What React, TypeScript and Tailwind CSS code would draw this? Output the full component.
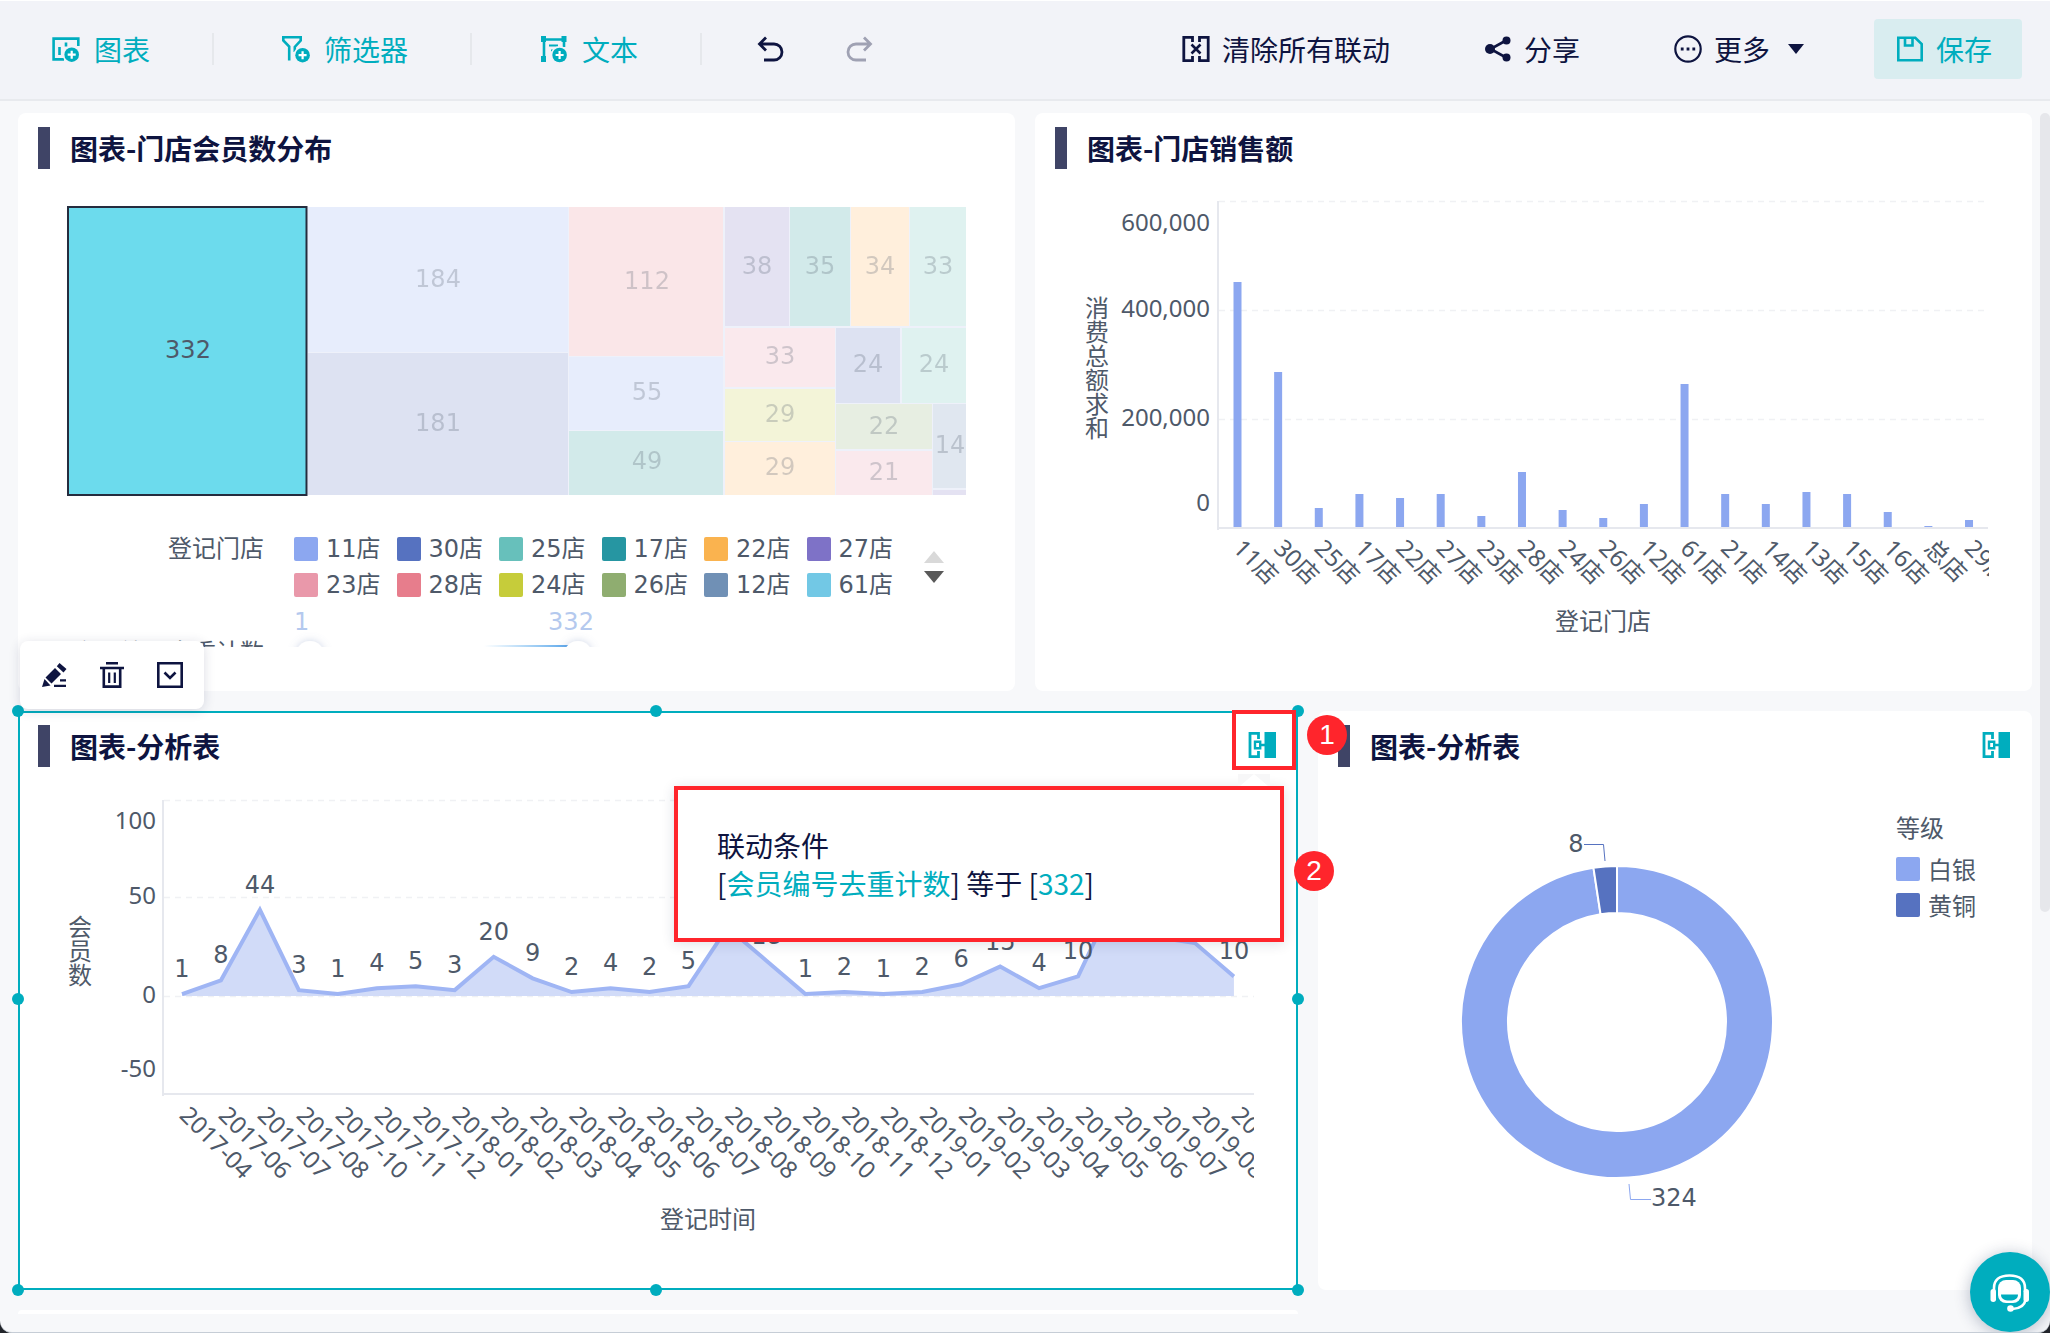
import React from "react";

const SANS = "font-['Noto_Sans_CJK_SC','Noto_Sans',sans-serif]";
const AXIS = "font-['Noto_Sans','Noto_Sans_CJK_SC',sans-serif] text-[24px] fill-[#4e5969]";
const LABEL = "font-['DejaVu_Sans','Noto_Sans_CJK_SC',sans-serif] text-[24px]";

/* ---------- icons ---------- */

function PlusBadge({ cx, cy }: { cx: number; cy: number }) {
  return (
    <>
      <circle cx={cx} cy={cy} r="9" stroke="none" className="fill-[#f2f3f8]" />
      <circle cx={cx} cy={cy} r="7.3" stroke="none" className="fill-[#00adbe]" />
      <path d={`M${cx - 4} ${cy}h8M${cx} ${cy - 4}v8`} className="stroke-white" strokeWidth="2.2" />
    </>
  );
}

function ChartAddIcon() {
  return (
    <svg viewBox="0 0 28 28" className="size-7" fill="none" stroke="currentColor" strokeWidth="2.6" aria-hidden="true">
      <path d="M26.3 11V3.6H1.6v20.8H12" />
      <path d="M7.5 12v8M14 7.5v4" />
      <PlusBadge cx={19.7} cy={19.7} />
    </svg>
  );
}

function FilterAddIcon() {
  return (
    <svg viewBox="0 0 28 28" className="size-7" fill="none" stroke="currentColor" strokeWidth="2.6" aria-hidden="true">
      <path d="M7.2 25.5V11.5L1.3 5.5V2.3h17.4v3.2L12.8 12v5" />
      <PlusBadge cx={20.6} cy={20.2} />
    </svg>
  );
}

function TextAddIcon() {
  return (
    <svg viewBox="0 0 28 28" className="size-7" fill="none" stroke="currentColor" strokeWidth="2.6" aria-hidden="true">
      <path d="M4 4.5h20M4 4v20M24 5v7" />
      <path d="M1 1h5v6H1zM21.500 1h5v6h-5zM1 21h5v6H1z" fill="currentColor" stroke="none" />
      <path d="M9 10.5h9M11 15.5h4" strokeWidth="2.2" />
      <PlusBadge cx={19.6} cy={20} />
    </svg>
  );
}

function UndoIcon({ flip = false }: { flip?: boolean }) {
  return (
    <svg viewBox="0 0 28 28" className="size-7" fill="none" stroke="currentColor" strokeWidth="2.8" aria-hidden="true">
      {flip ? (
        <path d="M19 2.5l6.500 6.500-6.500 6.500M25 9H11a8 8 0 0 0 0 16h10" />
      ) : (
        <path d="M9 2.500l-6.500 6.500 6.500 6.500M3 9h14a8 8 0 0 1 0 16H7" />
      )}
    </svg>
  );
}

function ClearLinkIcon() {
  return (
    <svg viewBox="0 0 28 28" className="size-7" fill="none" stroke="currentColor" strokeWidth="2.8" aria-hidden="true">
      <path d="M10.500 7V2.400H1.800v23.200h8.700V21M17.500 7V2.400h8.700v23.200h-8.700V21" />
      <path d="M9.500 9.500l9 9M18.500 9.500l-9 9" strokeWidth="2.600" />
    </svg>
  );
}

function ShareIcon() {
  return (
    <svg viewBox="0 0 28 28" className="size-7" aria-hidden="true">
      <path d="M22 5.500L6.500 14 22 22.500" fill="none" stroke="currentColor" strokeWidth="2.600" />
      <circle cx="22.500" cy="5.500" r="4" fill="currentColor" />
      <circle cx="6" cy="14" r="5" fill="currentColor" />
      <circle cx="22.500" cy="22.500" r="4" fill="currentColor" />
    </svg>
  );
}

function MoreIcon() {
  return (
    <svg viewBox="0 0 28 28" className="size-7" aria-hidden="true">
      <circle cx="14" cy="14" r="12.700" fill="none" stroke="currentColor" strokeWidth="2.200" />
      <path d="M6.800 12.600h2.800v2.800H6.800zM12.600 12.600h2.800v2.800h-2.800zM18.400 12.600h2.800v2.800h-2.800z" fill="currentColor" />
    </svg>
  );
}

function SaveIcon() {
  return (
    <svg viewBox="0 0 28 28" className="size-7" fill="none" stroke="currentColor" strokeWidth="2.600" aria-hidden="true">
      <path d="M2.300 2.800h17L25.700 9v16.200H2.300z" />
      <path d="M9 3v7.500h7.500V3" />
    </svg>
  );
}

function LinkIcon() {
  return (
    <svg viewBox="0 0 28 28" className="size-7" fill="none" stroke="currentColor" strokeWidth="2.800" aria-hidden="true">
      <path d="M10.500 8V2.400H2v23.200h8.500V20" />
      <path d="M7 10.800h5.200v6.400H7zM12 14h5" strokeWidth="2.400" />
      <path d="M16.500 1H28v26H16.500z" fill="currentColor" stroke="none" />
    </svg>
  );
}

function PencilIcon() {
  return (
    <svg viewBox="0 0 26 26" className="size-[26px]" fill="currentColor" aria-hidden="true">
      <path d="M14 6l6 6L10.500 21.500l-6-6zM15.800 4.200L18.500 1l7 6-3 3.400zM3.500 17l6 6.500L1 25z" />
      <path d="M19 17.200h6v2.300h-6zM13 22.700h12V25H13z" />
    </svg>
  );
}

function TrashIcon() {
  return (
    <svg viewBox="0 0 26 26" className="size-[26px]" fill="none" stroke="currentColor" strokeWidth="2.600" aria-hidden="true">
      <path d="M7 1.300h12M1 6h24M4.800 6v18.600h16.400V6" />
      <path d="M10.200 10.500v10.500M15.800 10.500v10.500" strokeWidth="2.200" />
    </svg>
  );
}

function ExpandIcon() {
  return (
    <svg viewBox="0 0 26 26" className="size-[26px]" fill="none" stroke="currentColor" strokeWidth="2.600" aria-hidden="true">
      <path d="M1.300 1.300h23.400v23.400H1.300z" />
      <path d="M7.500 10.500L13 16l5.500-5.500" />
    </svg>
  );
}

function HeadsetIcon() {
  return (
    <svg viewBox="0 0 44 44" className="size-11" fill="none" stroke="white" aria-hidden="true">
      <rect x="10" y="10" width="23" height="23" rx="8" fill="white" stroke="none" />
      <path d="M13 24.500h17c0 4-3 6-8.500 6s-8.500-2-8.500-6z" className="fill-[#00adbe]" stroke="none" />
      <path d="M6 22v-4C6 10 11 5.500 21.500 5.500S37 10 37 18v4" strokeWidth="2.600" />
      <rect x="2.500" y="19" width="5.500" height="13" rx="2.700" fill="white" stroke="none" />
      <rect x="35.500" y="19" width="5.500" height="13" rx="2.700" fill="white" stroke="none" />
      <path d="M37.500 30c-1 6-6 8.500-13 9" strokeWidth="2.600" />
      <circle cx="22.500" cy="38.500" r="3.300" fill="white" stroke="none" />
    </svg>
  );
}

/* ---------- toolbar ---------- */

function ToolButton({ icon, label, className }: { icon: React.ReactNode; label: string; className: string }) {
  return (
    <button type="button" className={`flex items-center whitespace-nowrap ${className}`}>
      {icon}
      <span>{label}</span>
    </button>
  );
}

const Divider = ({ className }: { className: string }) => <span className={`h-8 w-0.5 bg-[#e6e8ec] ${className}`} />;

function Toolbar() {
  return (
    <header className="flex items-center border-t border-t-white border-b-2 border-b-[#e8eaee] bg-[#f2f3f8] pt-[18px] pb-5 pr-7 pl-[52px] text-[28px] leading-10 text-[#0e1440]">
      <ToolButton icon={<ChartAddIcon />} label="图表" className="gap-3.5 text-[#00adbe]" />
      <Divider className="mr-[68px] ml-[62px]" />
      <ToolButton icon={<FilterAddIcon />} label="筛选器" className="gap-3.5 text-[#00adbe]" />
      <Divider className="mr-[68px] ml-[62px]" />
      <ToolButton icon={<TextAddIcon />} label="文本" className="gap-3.5 text-[#00adbe]" />
      <Divider className="mr-[55px] ml-[62px]" />
      <button type="button" aria-label="撤销" className="mr-[60px]">
        <UndoIcon />
      </button>
      <button type="button" aria-label="重做" className="text-[#9fa1b3]">
        <UndoIcon flip />
      </button>
      <div className="ml-auto flex items-center">
        <ToolButton icon={<ClearLinkIcon />} label="清除所有联动" className="mr-[94px] gap-3" />
        <ToolButton icon={<ShareIcon />} label="分享" className="mr-[94px] gap-3" />
        <button type="button" className="mr-[70px] flex items-center gap-3">
          <MoreIcon />
          <span>更多</span>
          <svg viewBox="0 0 16 10" className="ml-1.5 h-2.5 w-4" aria-hidden="true">
            <path d="M0 0h16L8 10z" fill="currentColor" />
          </svg>
        </button>
        <ToolButton icon={<SaveIcon />} label="保存" className="gap-3 rounded bg-[#d9edf0] py-2.5 pr-[30px] pl-[22px] text-[#00adbe]" />
      </div>
    </header>
  );
}

/* ---------- cards ---------- */

function CardTitle({ title, linked = false }: { title: string; linked?: boolean }) {
  return (
    <div className="flex h-[42px] items-center pr-5 pl-5">
      <span className="h-full w-3 bg-[#3f4466]" />
      <h2 className="ml-5 text-[28px] leading-[42px] font-bold text-[#0e1440]">{title}</h2>
      {linked && (
        <button type="button" aria-label="联动条件" className="mr-0.5 mb-0.5 ml-auto text-[#00adbe]">
          <LinkIcon />
        </button>
      )}
    </div>
  );
}

/* Tiles: x, y, width, height, colour, value, label centre x, label baseline */
const TILES: [number, number, number, number, string, string, number, number][] = [
  [308, 207, 260, 145, "#e7edfc", "184", 438, 287],
  [308, 353, 260, 142, "#dde2f2", "181", 438, 431],
  [569, 207, 154, 149, "#fae6e8", "112", 647, 289],
  [569, 357, 154, 73, "#e7edfc", "55", 647, 400],
  [569, 431, 154, 64, "#d2eaea", "49", 647, 469],
  [725, 207, 64, 119, "#e4e2f2", "38", 757, 274],
  [790, 207, 60, 119, "#d2eaea", "35", 820, 274],
  [851, 207, 58, 119, "#ffefdc", "34", 880, 274],
  [910, 207, 56, 119, "#dff2f0", "33", 938, 274],
  [725, 328, 110, 59, "#fae9ed", "33", 780, 364],
  [725, 389, 110, 52, "#f3f4d8", "29", 780, 422],
  [725, 442, 110, 53, "#ffefdc", "29", 780, 475],
  [836, 328, 64, 75, "#dde2f2", "24", 868, 372],
  [902, 328, 64, 75, "#dff2f0", "24", 934, 372],
  [836, 404, 96, 45, "#e7eee2", "22", 884, 434],
  [836, 451, 96, 44, "#fae9ed", "21", 884, 480],
  [933, 404, 33, 84, "#e0e7f0", "14", 950, 453],
  [933, 490, 33, 5, "#e4e2f2", "", 0, 0],
];

const STORE_LEGEND: [string, string][] = [
  ["11店", "#8ca7f0"],
  ["30店", "#5672c0"],
  ["25店", "#67c0bb"],
  ["17店", "#2696a2"],
  ["22店", "#fab34f"],
  ["27店", "#7e72c7"],
  ["23店", "#e998aa"],
  ["28店", "#e77d8c"],
  ["24店", "#c6cc3a"],
  ["26店", "#8fad70"],
  ["12店", "#7090b5"],
  ["61店", "#72c8e5"],
];

function MemberTreemapCard() {
  return (
    <section className="rounded-lg bg-white pt-3.5">
      <CardTitle title="图表-门店会员数分布" />
      <svg viewBox="18 169 997 332" className="block w-full" role="img" aria-label="门店会员数分布">
        <rect x="307" y="207" width="659" height="288" fill="#eef1fa" />
        {TILES.map(([x, y, w, h, color, value, cx, base], i) => (
          <g key={i}>
            <rect x={x} y={y} width={w} height={h} fill={color} />
            {value && (
              <text x={cx} y={base} textAnchor="middle" className={`${LABEL} fill-[#4e5969] opacity-25`}>
                {value}
              </text>
            )}
          </g>
        ))}
        <rect x="68" y="207" width="238.500" height="288" fill="#6cdbed" stroke="#252c3e" strokeWidth="2" />
        <text x="188" y="358" textAnchor="middle" className={`${LABEL} fill-[#4e5969]`}>
          332
        </text>
      </svg>
      <div className="mt-[30px] flex font-['DejaVu_Sans','Noto_Sans_CJK_SC',sans-serif] text-[24px] leading-9 text-[#4e5969]">
        <span className="w-[246px] text-right">登记门店</span>
        <ul className="ml-[30px] grid w-[615px] grid-cols-6">
          {STORE_LEGEND.map(([name, color]) => (
            <li key={name} className="flex h-9 items-center gap-2 whitespace-nowrap">
              <span className="size-6 rounded-xs" style={{ backgroundColor: color }} />
              {name}
            </li>
          ))}
        </ul>
        <div className="ml-[15px] flex flex-col justify-center gap-2">
          <button type="button" aria-label="上一页">
            <svg viewBox="0 0 20 12" className="block h-3 w-5">
              <path d="M10 0l10 12H0z" fill="#d9d9d9" />
            </svg>
          </button>
          <button type="button" aria-label="下一页">
            <svg viewBox="0 0 20 12" className="block h-3 w-5">
              <path d="M0 0h20L10 12z" fill="#595959" />
            </svg>
          </button>
        </div>
      </div>
      <div className="mb-11 flex h-11 overflow-hidden text-[24px] leading-9 text-[#4e5969]">
        <span className="w-[246px] pt-[30px] text-right">会员编号去重计数</span>
        <svg viewBox="264 603 360 44" className="h-11 w-[360px]" role="img" aria-label="1 到 332">
          <defs>
            <linearGradient id="range">
              <stop offset="0" stopColor="#5fb2f0" stopOpacity="0" />
              <stop offset="1" stopColor="#4f9fe8" />
            </linearGradient>
            <filter id="soft" x="-50%" y="-50%" width="200%" height="200%">
              <feDropShadow dx="0" dy="0" stdDeviation="4" floodColor="#6f86b8" floodOpacity="0.35" />
            </filter>
          </defs>
          <text x="294" y="630" className={`${LABEL} fill-[#b4c9ee]`}>
            1
          </text>
          <text x="571" y="630" textAnchor="middle" className={`${LABEL} fill-[#b4c9ee]`}>
            332
          </text>
          <rect x="484" y="645" width="90" height="4" fill="url(#range)" />
          <circle cx="310" cy="655" r="14" fill="white" filter="url(#soft)" />
          <circle cx="578" cy="655" r="14" fill="white" filter="url(#soft)" />
        </svg>
      </div>
    </section>
  );
}

/* Store name and y coordinate of the top of its bar */
const SALES: [string, number][] = [
  ["11店", 282],
  ["30店", 372],
  ["25店", 508],
  ["17店", 494],
  ["22店", 498],
  ["27店", 494],
  ["23店", 516],
  ["28店", 472],
  ["24店", 510],
  ["26店", 518],
  ["12店", 504],
  ["61店", 384],
  ["21店", 494],
  ["14店", 504],
  ["13店", 492],
  ["15店", 494],
  ["16店", 512],
  ["总店", 526],
  ["29店", 520],
];

function SalesBarCard() {
  return (
    <section className="rounded-lg bg-white pt-3.5">
      <CardTitle title="图表-门店销售额" />
      <svg viewBox="1035 169 997 522" className="block w-full" role="img" aria-label="门店销售额">
        <clipPath id="sales-clip">
          <rect x="1035" y="169" width="954" height="522" />
        </clipPath>
        {[201, 310, 419].map((y) => (
          <path key={y} d={`M1219 ${y + 0.5}H1988`} stroke="#f0f1f4" strokeWidth="1.5" strokeDasharray="6 5" />
        ))}
        <path d="M1218 201V530" stroke="#e6e8ee" strokeWidth="2" />
        <path d="M1218 528H1988" stroke="#e6e8ee" strokeWidth="2" />
        {[["600,000", 231], ["400,000", 317], ["200,000", 426], ["0", 511]].map(([t, y]) => (
          <text key={t} x="1210" y={y} textAnchor="end" className={AXIS}>
            {t}
          </text>
        ))}
        {"消费总额求和".split("").map((c, i) => (
          <text key={c} x="1097" y={317 + i * 24} textAnchor="middle" className={AXIS}>
            {c}
          </text>
        ))}
        <g clipPath="url(#sales-clip)">
          {SALES.map(([name, top], i) => {
            const x = 1237.5 + i * 40.64;
            return (
              <g key={name}>
                <rect x={x - 4} y={top} width="8" height={527 - top} fill="#8ca7f0" />
                <text transform={`translate(${x} 544) rotate(45)`} y="8" className={AXIS}>
                  {name}
                </text>
              </g>
            );
          })}
        </g>
        <text x="1603" y="630" textAnchor="middle" className={AXIS}>
          登记门店
        </text>
      </svg>
    </section>
  );
}

const MONTHS = [
  "2017-04", "2017-06", "2017-07", "2017-08", "2017-10", "2017-11", "2017-12",
  "2018-01", "2018-02", "2018-03", "2018-04", "2018-05", "2018-06", "2018-07",
  "2018-08", "2018-09", "2018-10", "2018-11", "2018-12", "2019-01", "2019-02",
  "2019-03", "2019-04", "2019-05", "2019-06", "2019-07", "2019-08", "2019-09",
];
const MEMBERS = [1, 8, 44, 3, 1, 4, 5, 3, 20, 9, 2, 4, 2, 5, 35, 18, 1, 2, 1, 2, 6, 15, 4, 10, 52, 30, 27, 10];
/* Points whose label would lie wholly under the open popover */
const UNLABELLED = [14, 24, 25, 26];
const px = (i: number) => 182 + i * 38.96;
const py = (v: number) => 996 - v * 1.96;

function MemberAreaChart() {
  const line = MEMBERS.map((v, i) => `${px(i)} ${py(v)}`).join("L");
  return (
    <svg viewBox="18 767 1280 523" className="block w-full" role="img" aria-label="会员数按登记时间">
      <clipPath id="months-clip">
        <rect x="18" y="767" width="1236" height="523" />
      </clipPath>
      {[800, 897, 996].map((y) => (
        <path key={y} d={`M164 ${y + 0.5}H1254`} stroke="#f0f1f4" strokeWidth="1.5" strokeDasharray="6 5" />
      ))}
      <path d="M163 800V1096" stroke="#e6e8ee" strokeWidth="2" />
      <path d="M163 1094H1254" stroke="#e6e8ee" strokeWidth="2" />
      <path d={`M${px(0)} 996L${line}L${px(27)} 996Z`} fill="#d1dbf8" />
      <path d={`M${line}`} fill="none" stroke="#9fb5f4" strokeWidth="4" strokeLinejoin="miter" />
      {[["100", 829], ["50", 904], ["0", 1003], ["-50", 1077]].map(([t, y]) => (
        <text key={t} x="156" y={y} textAnchor="end" className={AXIS}>
          {t}
        </text>
      ))}
      {"会员数".split("").map((c, i) => (
        <text key={c} x="80" y={936 + i * 24} textAnchor="middle" className={AXIS}>
          {c}
        </text>
      ))}
      {MEMBERS.map((v, i) =>
        UNLABELLED.includes(i) ? null : (
          <text key={i} x={px(i)} y={py(v) - 17} textAnchor="middle" className={`${LABEL} fill-[#4e5969]`}>
            {v}
          </text>
        ),
      )}
      <g clipPath="url(#months-clip)">
        {MONTHS.map((m, i) => (
          <text key={m} transform={`translate(${px(i) + 2} 1111) rotate(45)`} y="8" className={AXIS}>
            {m}
          </text>
        ))}
      </g>
      <text x="708" y="1228" textAnchor="middle" className={AXIS}>
        登记时间
      </text>
    </svg>
  );
}

function SelectionFrame() {
  const dot = "absolute size-3 rounded-full bg-[#00adbe]";
  return (
    <div className="pointer-events-none absolute inset-0 border-2 border-[#00adbe]">
      <span className={`${dot} -top-2 -left-2`} />
      <span className={`${dot} -top-2 left-1/2 -translate-x-2`} />
      <span className={`${dot} -top-2 -right-2`} />
      <span className={`${dot} top-1/2 -left-2 -translate-y-2`} />
      <span className={`${dot} top-1/2 -right-2 -translate-y-2`} />
      <span className={`${dot} -bottom-2 -left-2`} />
      <span className={`${dot} -bottom-2 left-1/2 -translate-x-2`} />
      <span className={`${dot} -right-2 -bottom-2`} />
    </div>
  );
}

function Badge({ n, className }: { n: number; className: string }) {
  return (
    <span
      className={`absolute flex size-10 items-center justify-center rounded-full bg-[#ff252c] font-['Liberation_Sans',sans-serif] text-[28px] leading-none text-white ${className}`}
    >
      {n}
    </span>
  );
}

function SelectedCard() {
  return (
    <section className="relative z-10 bg-white pt-3.5">
      <CardTitle title="图表-分析表" linked />
      <MemberAreaChart />
      <SelectionFrame />
      <div className="absolute bottom-full left-0.5 mb-0.5 flex gap-8 rounded-lg bg-white px-[21px] py-[21px] text-[#0e1440] shadow-[0_2px_12px_rgba(30,40,80,0.16)]">
        <button type="button" aria-label="编辑">
          <PencilIcon />
        </button>
        <button type="button" aria-label="删除">
          <TrashIcon />
        </button>
        <button type="button" aria-label="展开">
          <ExpandIcon />
        </button>
      </div>
      <div className="absolute top-[75px] right-3.5 w-[610px] border-4 border-[#ff252c] bg-white px-[39px] py-9 text-[28px] leading-[38px] text-[#0e1440] shadow-[0_2px_12px_rgba(30,40,80,0.14)]">
        <svg viewBox="0 0 32 12" className="absolute right-2.5 bottom-full mb-1 h-3 w-8" aria-hidden="true">
          <path d="M0 0h32v12H0z" fill="#f7f7f8" />
          <path d="M16 0l14 12H2z" fill="white" />
        </svg>
        <p>联动条件</p>
        <p>
          [<span className="text-[#00adbe]">会员编号去重计数</span>] 等于 [<span className="text-[#00adbe]">332</span>]
        </p>
      </div>
      <span className="pointer-events-none absolute -top-px right-0.5 h-[60px] w-16 border-4 border-[#ff252c]" />
      <Badge n={1} className="top-1 -right-[49px]" />
      <Badge n={2} className="top-[140px] -right-9" />
    </section>
  );
}

function DonutCard() {
  const cx = 1617;
  const cy = 1022;
  const a = (8 / 332) * 2 * Math.PI;
  const at = (r: number) => `${cx - r * Math.sin(a)} ${cy - r * Math.cos(a)}`;
  return (
    <section className="rounded-lg bg-white pt-3.5">
      <CardTitle title="图表-分析表" linked />
      <div className="flex items-start">
        <svg viewBox="1318 767 578 523" className="block min-w-0 flex-1" role="img" aria-label="等级分布">
          <path
            d={`M${cx} ${cy - 156}A156 156 0 1 1 ${at(156)}L${at(109)}A109 109 0 1 0 ${cx} ${cy - 109}Z`}
            fill="#8ca7f0"
            stroke="white"
            strokeWidth="2"
          />
          <path
            d={`M${cx} ${cy - 156}A156 156 0 0 0 ${at(156)}L${at(109)}A109 109 0 0 1 ${cx} ${cy - 109}Z`}
            fill="#5672c0"
            stroke="white"
            strokeWidth="2"
          />
          <path d="M1584 844.500H1603.500L1605 861" fill="none" stroke="#5672c0" />
          <path d="M1629 1184L1630.500 1199.500H1651" fill="none" stroke="#8ca7f0" />
          <text x="1576" y="852" textAnchor="middle" className={`${LABEL} fill-[#4e5969]`}>
            8
          </text>
          <text x="1651" y="1206" className={`${LABEL} fill-[#4e5969]`}>
            324
          </text>
        </svg>
        <div className="w-[136px] pt-[42px] text-[24px] leading-9 text-[#4e5969]">
          <p className="mb-1.5">等级</p>
          <ul>
            <li className="flex items-center gap-2">
              <span className="size-6 rounded-xs bg-[#8ca7f0]" />
              白银
            </li>
            <li className="flex items-center gap-2">
              <span className="size-6 rounded-xs bg-[#5672c0]" />
              黄铜
            </li>
          </ul>
        </div>
      </div>
    </section>
  );
}

export default function App() {
  return (
    <div className={`${SANS} min-h-screen overflow-hidden bg-[#22252b]`}>
      <div className="relative min-h-screen overflow-hidden rounded-b-xl border-b border-b-[#c6cdd6] bg-[#f7f8fa]">
        <Toolbar />
        <main className="flex flex-col gap-5 px-[18px] pt-3 pb-[18px]">
          <div className="grid grid-cols-2 gap-5">
            <MemberTreemapCard />
            <SalesBarCard />
          </div>
          <div className="grid grid-cols-[1280fr_714fr] gap-5">
            <SelectedCard />
            <DonutCard />
          </div>
          <div className="grid grid-cols-[1280fr_714fr] gap-5">
            <div className="h-1 rounded-t-lg bg-white" />
          </div>
        </main>
        <span className="absolute top-[113px] right-0 h-[799px] w-2.5 rounded-full bg-[#e6e7eb]" />
        <button
          type="button"
          aria-label="在线客服"
          className="absolute right-0 bottom-0 z-20 flex size-20 items-center justify-center rounded-full bg-[#00adbe] shadow-[0_2px_16px_rgba(20,40,80,0.3)]"
        >
          <HeadsetIcon />
        </button>
      </div>
    </div>
  );
}
